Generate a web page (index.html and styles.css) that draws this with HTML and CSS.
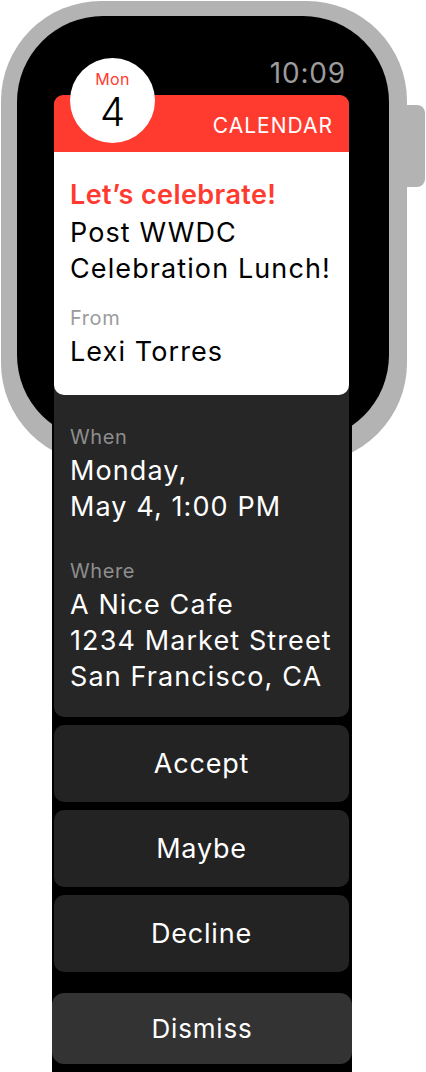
FILE: index.html
```html
<!DOCTYPE html>
<html lang="en">
<head>
<meta charset="utf-8">
<title>Calendar notification</title>
<link rel="stylesheet" href="styles.css">
</head>
<body>
<div class="device">
  <div class="case"></div>
  <div class="crown"></div>
  <div class="bezel"></div>
  <div class="screen">
    <div class="status"><span class="time">10:09</span></div>
    <div class="date-badge">
      <span class="badge-day">Mon</span>
      <span class="badge-num">4</span>
    </div>
    <div class="card">
      <div class="card-head"><span class="app-name">CALENDAR</span></div>
      <div class="card-body">
        <div class="title">Let’s celebrate!</div>
        <div class="line">Post WWDC</div>
        <div class="line">Celebration Lunch!</div>
        <div class="label label-from">From</div>
        <div class="line line-after-label">Lexi Torres</div>
      </div>
      <div class="card-detail">
        <div class="label dark-label">When</div>
        <div class="line line-after-label">Monday,</div>
        <div class="line">May 4, 1:00 PM</div>
        <div class="label dark-label label-where">Where</div>
        <div class="line line-after-label">A Nice Cafe</div>
        <div class="line">1234 Market Street</div>
        <div class="line">San Francisco, CA</div>
      </div>
    </div>
    <div class="actions">
      <div class="action">Accept</div>
      <div class="action">Maybe</div>
      <div class="action">Decline</div>
    </div>
    <div class="dismiss">Dismiss</div>
  </div>
</div>
</body>
</html>
```

FILE: styles.css
```css
* { box-sizing: border-box; }

html, body {
  margin: 0;
  padding: 0;
  background: #ffffff;
}

body {
  font-family: Inter, "Noto Sans", "Liberation Sans", sans-serif;
  -webkit-font-smoothing: antialiased;
}

.device {
  position: relative;
  width: 426px;
  height: 1072px;
  overflow: hidden;
}

/* decorative watch case behind the screen column */
.case {
  position: absolute;
  left: 1px;
  top: 1px;
  width: 406px;
  height: 462px;
  background: #b3b3b3;
  border-radius: 100px;
}

.crown {
  position: absolute;
  left: 400px;
  top: 105px;
  width: 25px;
  height: 82px;
  background: #b3b3b3;
  border-radius: 0 8px 8px 0;
}

.bezel {
  position: absolute;
  left: 17px;
  top: 16px;
  width: 372px;
  height: 425px;
  background: #000000;
  border-radius: 86px;
}

.screen {
  position: relative;
  margin-left: 52px;
  width: 300px;
  min-height: 1072px;
  background: linear-gradient(to bottom, transparent 0, transparent 200px, #000000 200px);
  color: #ffffff;
  padding-bottom: 9px;
}

.status {
  padding-top: 59px;
  padding-right: 6px;
  height: 95px;
  text-align: right;
}

.time {
  display: inline-block;
  font-size: 28px;
  line-height: 28px;
  color: #9c9c9c;
  letter-spacing: 0.8px;
}

.date-badge {
  position: absolute;
  left: 18px;
  top: 58px;
  width: 85px;
  height: 85px;
  border-radius: 50%;
  background: #ffffff;
  display: flex;
  flex-direction: column;
  align-items: center;
  padding-top: 13px;
  z-index: 2;
}

.badge-day {
  font-size: 16px;
  line-height: 16px;
  color: #ff3b30;
  letter-spacing: 0.3px;
}

.badge-num {
  margin-top: 8px;
  font-size: 40px;
  line-height: 34px;
  font-weight: 300;
  color: #000000;
}

.card {
  margin-left: 2px;
  width: 295px;
}

.card-head {
  height: 57px;
  background: #ff3b30;
  border-radius: 9px 9px 0 0;
  padding-top: 20px;
  padding-right: 16px;
  text-align: right;
}

.app-name {
  font-size: 21px;
  line-height: 21px;
  letter-spacing: 1px;
  color: #ffffff;
}

.card-body {
  background: #ffffff;
  color: #000000;
  padding: 25px 16px 25px;
  border-radius: 0 0 10px 10px;
  position: relative;
  z-index: 1;
}

.title {
  font-size: 27px;
  line-height: 36px;
  font-weight: 600;
  color: #ff3b30;
  letter-spacing: 0.4px;
  margin-bottom: 2px;
}

.line {
  font-size: 27px;
  line-height: 36px;
  letter-spacing: 1.1px;
  white-space: nowrap;
}

.label {
  font-size: 20px;
  line-height: 24px;
  letter-spacing: 0.6px;
  color: #9b9b9b;
}

.label-from { margin-top: 19px; }
.line-after-label { margin-top: 4px; }

.card-detail {
  background: #262626;
  margin-top: -10px;
  padding: 40px 16px 22px;
  border-radius: 0 0 10px 10px;
}

.dark-label { color: #8e8e8e; }
.label-where { margin-top: 34px; }

.actions {
  margin-left: 2px;
  width: 295px;
  margin-top: 8px;
  display: flex;
  flex-direction: column;
  gap: 8px;
}

.action {
  height: 77px;
  background: #232323;
  border-radius: 10px;
  display: flex;
  align-items: center;
  justify-content: center;
  font-size: 27px;
  letter-spacing: 0.8px;
}

.dismiss {
  margin-top: 21px;
  height: 71px;
  background: #333333;
  border-radius: 12px;
  display: flex;
  align-items: center;
  justify-content: center;
  font-size: 26px;
  letter-spacing: 0.8px;
}
```
